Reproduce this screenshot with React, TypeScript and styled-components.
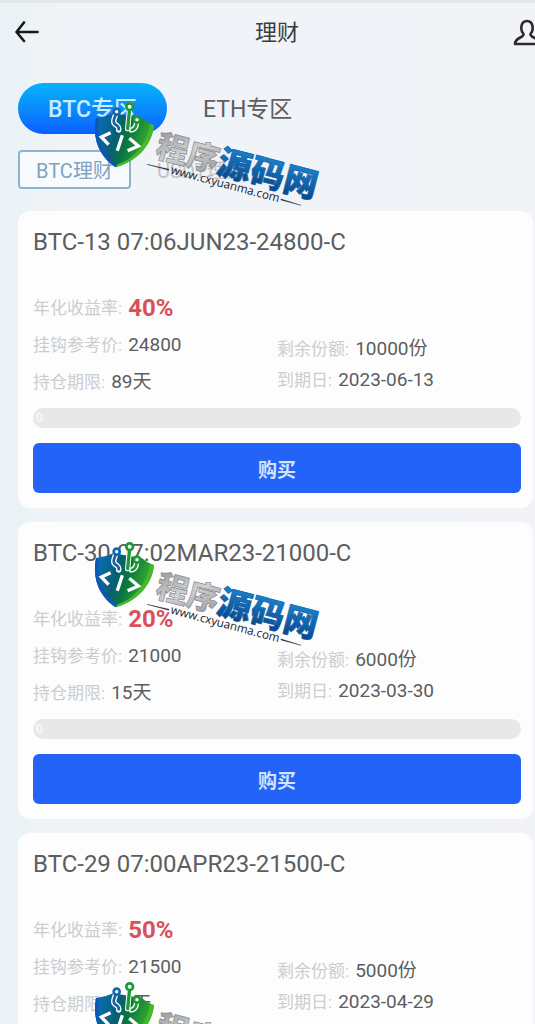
import React from "react";
import styled, { createGlobalStyle } from "styled-components";

const Global = createGlobalStyle`
  *, *::before, *::after { box-sizing: border-box; }
  body { margin: 0; background: #f0f4f7; font-family: Roboto, "Noto Sans CJK SC", sans-serif; color: #5b5d5f; }
  button { font: inherit; border: 0; background: none; padding: 0; cursor: pointer; }
  h1, h2, dl, dd, dt { margin: 0; font-weight: 400; }
`;

const Shell = styled.div`
  position: relative;
  height: 100vh;
  overflow: hidden auto;
  scrollbar-width: none;
  border-top: 3px solid #e3e7ea;
  background: linear-gradient(90deg, #e9f2f5 0, #f0f3f7 60px, #f1f3f7 100%);
`;

const Header = styled.header`
  display: grid;
  grid-template-columns: 1fr auto 1fr;
  align-items: center;
  height: 60px;
  padding-left: 15px;
`;

const Title = styled.h1`
  font-size: 22px;
  line-height: 32px;
  color: #3c3c3e;
  padding-left: 4px;
`;

const IconButton = styled.button<{ $end?: boolean }>`
  display: flex;
  justify-self: ${(p) => (p.$end ? "end" : "start")};
  margin-right: ${(p) => (p.$end ? "-6px" : "0")};
`;

const Zones = styled.nav`
  display: flex;
  gap: 6px;
  padding: 20px 18px 0;
`;

const Zone = styled.button<{ $active?: boolean }>`
  height: 51px;
  padding: 2px 30px 0;
  border-radius: 26px;
  font-size: 23px;
  font-weight: ${(p) => (p.$active ? 500 : 400)};
  line-height: 32px;
  color: ${(p) => (p.$active ? "#c9ecff" : "#5c5e61")};
  background: ${(p) => (p.$active ? "linear-gradient(180deg, #05b3f8, #0a87fd 55%, #0a60ff)" : "none")};
`;

const Kinds = styled.nav`
  display: flex;
  gap: 8px;
  padding: 16px 18px 0;
`;

const Kind = styled.button<{ $active?: boolean }>`
  height: 39px;
  padding: 2px 16px 0;
  border: 2px solid ${(p) => (p.$active ? "#8db4cc" : "transparent")};
  border-radius: 4px;
  background: ${(p) => (p.$active ? "#f8fbfd" : "none")};
  font-size: 20px;
  line-height: 28px;
  color: ${(p) => (p.$active ? "#7fa3c0" : "#c0c2c6")};
`;

const List = styled.main`
  display: flex;
  flex-direction: column;
  gap: 14px;
  padding: 22px 2px 14px 18px;
`;

const Card = styled.article`
  padding: 15px 12px 15px 15px;
  border-radius: 12px;
  background: #fdfdfe;
`;

const CardTitle = styled.h2`
  font-size: 24px;
  line-height: 32px;
`;

const Facts = styled.div`
  display: grid;
  grid-template-columns: 1fr 1fr;
  align-items: end;
  padding-top: 31px;
`;

const FactColumn = styled.dl<{ $tight?: boolean }>`
  display: grid;
  grid-auto-rows: ${(p) => (p.$tight ? "31px" : "37px")};
  align-items: center;
  padding-bottom: ${(p) => (p.$tight ? "5px" : "0")};
`;

const Fact = styled.div`
  display: flex;
  align-items: center;
  gap: 6px;
`;

const Term = styled.dt`
  font-size: 17px;
  line-height: 24px;
  color: #cbcdcf;
`;

const Value = styled.dd<{ $rate?: boolean }>`
  font-size: ${(p) => (p.$rate ? "24px" : "19px")};
  font-weight: ${(p) => (p.$rate ? 700 : 400)};
  line-height: 28px;
  color: ${(p) => (p.$rate ? "#d9505a" : "#5b5d5f")};
`;

const Track = styled.div`
  height: 20px;
  margin-top: 8px;
  padding-left: 3px;
  border-radius: 10px;
  background: #e8e8e8;
  font-size: 12px;
  line-height: 20px;
  color: #fff;
`;

const Buy = styled.button`
  display: block;
  width: 100%;
  height: 50px;
  margin-top: 15px;
  border-radius: 6px;
  background: #2463f8;
  color: #d3e4ff;
  font-size: 19px;
  font-weight: 700;
`;

const Mark = styled.svg<{ $top: number }>`
  position: absolute;
  left: 80px;
  top: ${(p) => p.$top}px;
  pointer-events: none;
`;

function Watermark({ top, id }: { top: number; id: string }) {
  return (
    <Mark $top={top} width="250" height="120" viewBox="0 0 750 360" aria-hidden="true">
      <defs>
        <linearGradient id={id + "shield"} x1="0" y1="0.1" x2="1" y2="0.4">
          <stop offset="0" stopColor="#0a70bd" />
          <stop offset="0.4" stopColor="#075f78" />
          <stop offset="0.6" stopColor="#0a7440" />
          <stop offset="1" stopColor="#3fb52a" />
        </linearGradient>
        <linearGradient id={id + "grey"} x1="0" y1="0" x2="1" y2="1">
          <stop offset="0" stopColor="#85878a" />
          <stop offset="0.5" stopColor="#d0d1d3" />
          <stop offset="1" stopColor="#8d8f92" />
        </linearGradient>
        <linearGradient id={id + "blue"} x1="0" y1="0" x2="0" y2="1">
          <stop offset="0.2" stopColor="#1583d0" />
          <stop offset="1" stopColor="#0a3a7a" />
        </linearGradient>
      </defs>
      <path d="M48 84Q75 82 100 70L185 84Q204 100 222 106C216 165 172 214 107 232C60 200 36 150 48 84Z" fill={`url(#${id}shield)`} />
      <path d="M48 84C36 150 60 200 107 232L112 224C70 196 50 150 56 84Z" fill="#0d56b8" />
      <path d="M222 106C216 165 172 214 107 232L112 223C164 206 202 160 210 101Z" fill="#46b82c" />
      <g fill="none" strokeLinecap="round" strokeLinejoin="round">
        <path d="M110 64L102 88Q98 100 110 106Q118 112 116 120M149 52L143 116M171 90L168 108Q164 118 154 120" stroke="#fff" strokeWidth="16" />
        <path d="M110 66L102 88Q98 100 110 106Q118 112 116 118" stroke="#0f62a4" strokeWidth="8" />
        <path d="M149 56L143 116" stroke="#1c9a34" strokeWidth="10" />
        <path d="M171 92L168 108Q164 118 155 120" stroke="#1c9a34" strokeWidth="8" />
        <circle cx="149" cy="50" r="10" fill="#fff" stroke="#1c9a34" strokeWidth="8" />
        <circle cx="110" cy="65" r="9" fill="#fff" stroke="#1268ad" strokeWidth="8" />
        <circle cx="171" cy="89" r="9" fill="#fff" stroke="#1c9a34" strokeWidth="8" />
      </g>
      <path d="M92 128L64 141L86 164M127 136L112 182M148 145L175 168L143 182" fill="none" stroke="#fff" strokeWidth="10" />
      <g transform="translate(216 216) rotate(14.5)" fontFamily='"Noto Sans CJK SC", sans-serif' fontWeight="900">
        <text x="2" y="-18" fontSize="96" fill={`url(#${id}grey)`} stroke="#85878a" strokeWidth="2">程序</text>
        <text x="192" y="-16" fontSize="102" fill={`url(#${id}blue)`} stroke="#125da3" strokeWidth="2">源码网</text>
      </g>
      <g transform="translate(270 250) rotate(15)">
        <text fontFamily='"Open Sans", sans-serif' fontSize="35" fontWeight="500" fill="#17202c">www.cxyuanma.com</text>
        <path d="M-74 -8L-6 -11V-8ZM342 -12L404 -9L342 -9Z" fill="#17202c" stroke="#17202c" />
      </g>
    </Mark>
  );
}

const products = [
  { name: "BTC-13 07:06JUN23-24800-C", rate: "40%", price: "24800", term: "89天", left: "10000份", due: "2023-06-13" },
  { name: "BTC-30 07:02MAR23-21000-C", rate: "20%", price: "21000", term: "15天", left: "6000份", due: "2023-03-30" },
  { name: "BTC-29 07:00APR23-21500-C", rate: "50%", price: "21500", term: "45天", left: "5000份", due: "2023-04-29" },
];

export default function App() {
  return (
    <Shell>
      <Global />
      <Header>
        <IconButton aria-label="返回">
          <svg width="26" height="24" viewBox="0 0 26 24" fill="none" stroke="#171717" strokeWidth="2.6" strokeLinecap="round" strokeLinejoin="round">
            <path d="M22.500 11H2M9 1.500L1.500 11L9 20" />
          </svg>
        </IconButton>
        <Title>理财</Title>
        <IconButton $end aria-label="我的">
          <svg width="28" height="28" viewBox="0 0 28 28" fill="none" stroke="#2b2b2b" strokeWidth="2.6" strokeLinejoin="round">
            <path d="M10.500 15C7 11 7.500 2 14 2S21 11 17.500 15C17 19 26 18 26 25H2C2 18 11 19 10.500 15Z" />
          </svg>
        </IconButton>
      </Header>
      <Zones>
        <Zone $active>BTC专区</Zone>
        <Zone>ETH专区</Zone>
      </Zones>
      <Kinds>
        <Kind $active>BTC理财</Kind>
        <Kind>USDT理财</Kind>
      </Kinds>
      <List>
        {products.map((p) => (
          <Card key={p.name}>
            <CardTitle>{p.name}</CardTitle>
            <Facts>
              <FactColumn>
                <Fact><Term>年化收益率:</Term><Value $rate>{p.rate}</Value></Fact>
                <Fact><Term>挂钩参考价:</Term><Value>{p.price}</Value></Fact>
                <Fact><Term>持仓期限:</Term><Value>{p.term}</Value></Fact>
              </FactColumn>
              <FactColumn $tight>
                <Fact><Term>剩余份额:</Term><Value>{p.left}</Value></Fact>
                <Fact><Term>到期日:</Term><Value>{p.due}</Value></Fact>
              </FactColumn>
            </Facts>
            <Track role="progressbar" aria-label="认购进度" aria-valuenow={0}>0</Track>
            <Buy>购买</Buy>
          </Card>
        ))}
      </List>
      <Watermark id="a" top={87} />
      <Watermark id="b" top={527} />
      <Watermark id="c" top={967} />
    </Shell>
  );
}
